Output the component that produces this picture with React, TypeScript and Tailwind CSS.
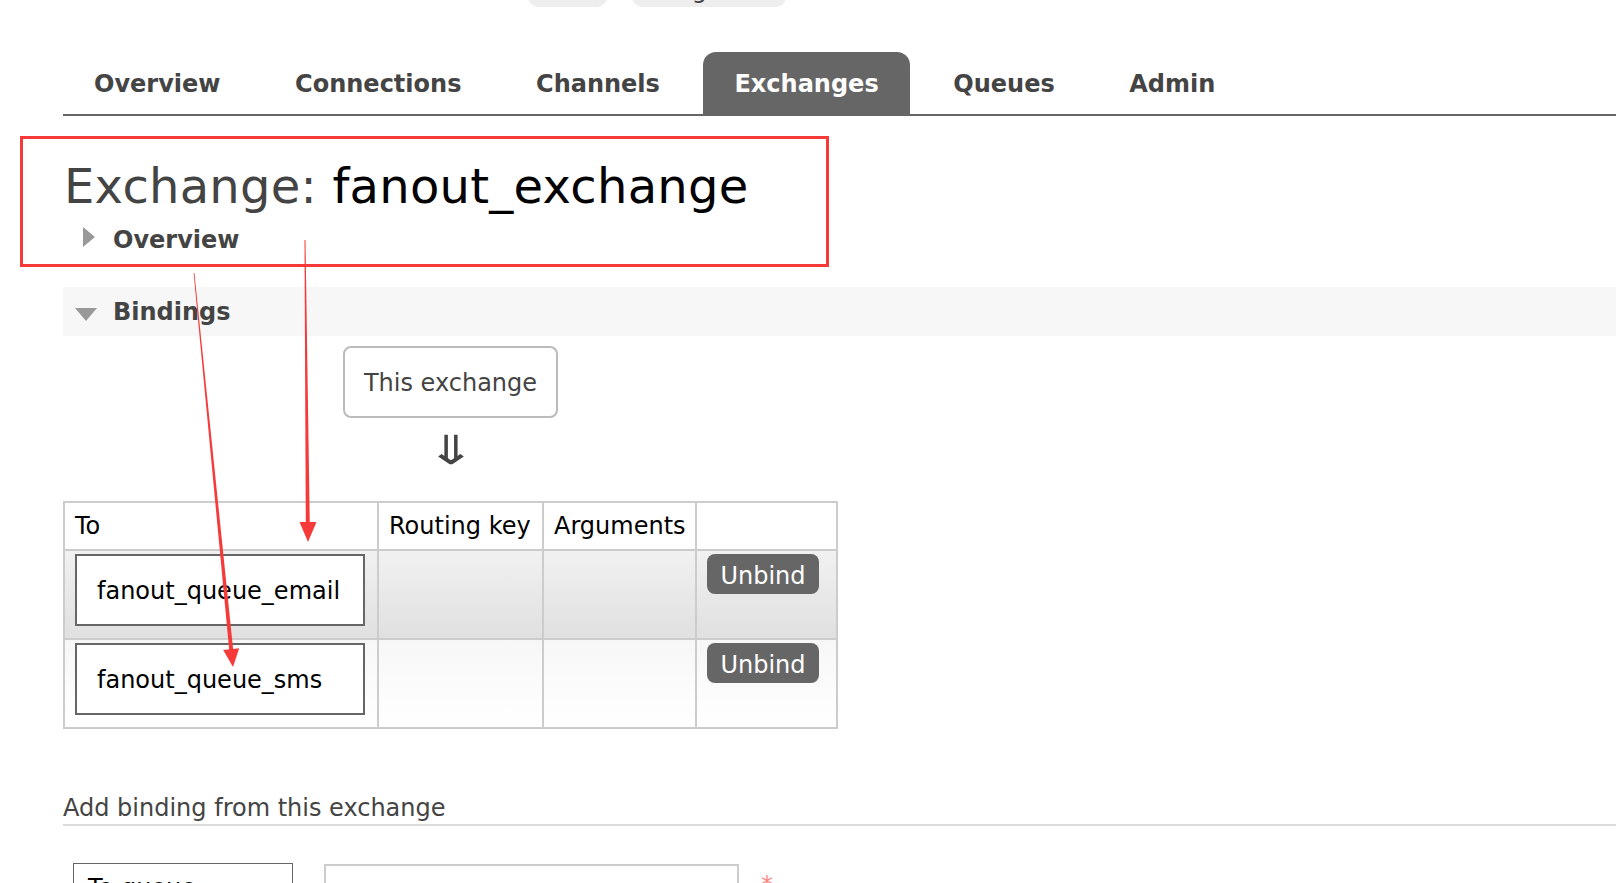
import type { FC } from 'react';

const tabs = ['Overview', 'Connections', 'Channels', 'Exchanges', 'Queues', 'Admin'];
const bindings = ['fanout_queue_email', 'fanout_queue_sms'];

const Annotations: FC = () => (
  <svg className="pointer-events-none absolute left-0 top-0" width={1616} height={883}>
    <rect x={21.5} y={137.5} width={806} height={128} fill="none" stroke="#f63a3a" strokeWidth={3} />
    {/* arrow to the "To" header */}
    <polygon points="304.5,240 305.5,240 309.8,525 305.8,525" fill="#f63a3a" />
    <polygon points="299.5,522 316.5,522 308,542" fill="#f63a3a" />
    {/* arrow to the second queue */}
    <polygon points="193.6,273 194.4,273 233.2,650 229.2,650" fill="#f63a3a" />
    <polygon points="223.2,649.9 239.2,648.3 233,667" fill="#f63a3a" />
  </svg>
);

export default function App() {
  return (
    <div className="relative h-[883px] w-full overflow-hidden bg-white font-['DejaVu_Sans',sans-serif] text-[#444]">
      {/* header controls, cut off by the top edge */}
      <div className="flex h-[7px] items-end overflow-hidden">
        <div className="ml-[528px] h-[44px] w-[79px] shrink-0 rounded-b-[10px] bg-[#eee]" />
        <div className="ml-[25px] flex h-[44px] w-[154px] shrink-0 items-end justify-center rounded-b-[10px] bg-[#eee] pb-[1px] text-[24px] leading-[32px]">
          Log out
        </div>
      </div>

      {/* tabs */}
      <nav className="ml-[63px] mt-[45px] flex border-b-2 border-[#666]">
        {tabs.map((t) => (
          <div
            key={t}
            className={
              t === 'Exchanges'
                ? 'mr-[12.6px] flex h-[62px] items-center rounded-t-[13px] bg-[#666] px-[31px] pt-[2px] text-[24px] font-bold text-white'
                : 'mr-[12.6px] flex h-[62px] items-center px-[31px] pt-[2px] text-[24px] font-bold text-[#444]'
            }
          >
            {t}
          </div>
        ))}
      </nav>

      {/* title */}
      <h1 className="ml-[64px] mt-[42px] h-[56px] text-[48px] font-normal leading-[56px] tracking-[0.25px] text-[#444]">
        Exchange: <span className="text-black">fanout_exchange</span>
      </h1>

      <div className="ml-[83px] mt-[10px] flex h-[32px] items-center gap-[18px]">
        <svg width={12} height={20} className="mt-[-6px]">
          <polygon points="0,0 12,10 0,20" fill="#999" />
        </svg>
        <span className="text-[24px] font-bold leading-[32px] text-[#444]">Overview</span>
      </div>

      {/* bindings section */}
      <div className="ml-[63px] mt-[31px] flex h-[49px] items-center bg-[#f7f7f7] pl-[12px]">
        <svg width={22} height={13} className="mt-[6px]">
          <polygon points="0,0 22,0 11,13" fill="#999" />
        </svg>
        <span className="ml-[16px] text-[24px] font-bold leading-[32px] text-[#444]">Bindings</span>
      </div>

      <div className="ml-[63px] flex w-[775px] flex-col items-center">
        <div className="mt-[10px] flex h-[72px] w-[215px] items-center justify-center rounded-[8px] border-2 border-[#bbb] pt-[2px] text-[24px] leading-[32px] text-[#444]">
          This exchange
        </div>
        <div className="mt-[12px] flex h-[40px] scale-x-[1.5] items-center justify-center text-[40px] leading-none text-[#444]">
          ⇓
        </div>
      </div>

      <div className="ml-[63px] mt-[31px] grid w-[775px] grid-cols-[314px_165px_153px_141px] border-l-2 border-t-2 border-[#ccc] text-[24px] leading-[32px] text-black">
        <div className="flex h-[48px] items-center border-b-2 border-r-2 border-[#ccc] pl-[10px]">To</div>
        <div className="flex h-[48px] items-center border-b-2 border-r-2 border-[#ccc] pl-[10px]">Routing key</div>
        <div className="flex h-[48px] items-center border-b-2 border-r-2 border-[#ccc] pl-[10px]">Arguments</div>
        <div className="h-[48px] border-b-2 border-r-2 border-[#ccc]" />
        {bindings.map((q, i) => {
          const bg =
            i === 0
              ? 'bg-linear-to-b from-[#f1f1f1] to-[#e0e0e0]'
              : 'bg-linear-to-b from-[#f7f7f7] to-[#ffffff]';
          return [
            <div key={q + 'a'} className={`h-[89px] border-b-2 border-r-2 border-[#ccc] pl-[10px] pt-[3px] ${bg}`}>
              <div className="flex h-[72px] w-[290px] items-center border-2 border-[#666] bg-white pl-[20px] pt-[2px]">{q}</div>
            </div>,
            <div key={q + 'b'} className={`h-[89px] border-b-2 border-r-2 border-[#ccc] ${bg}`} />,
            <div key={q + 'c'} className={`h-[89px] border-b-2 border-r-2 border-[#ccc] ${bg}`} />,
            <div key={q + 'd'} className={`h-[89px] border-b-2 border-r-2 border-[#ccc] pl-[10px] pt-[3px] ${bg}`}>
              <button className="flex h-[40px] w-[112px] items-center justify-center rounded-[8px] bg-[#666] pt-[3px] text-[24px] leading-[32px] text-white">
                Unbind
              </button>
            </div>,
          ];
        })}
      </div>

      {/* add binding */}
      <h2 className="ml-[63px] mt-[63px] border-b-2 border-[#ddd] text-[24px] font-normal leading-[32px] text-[#444]">
        Add binding from this exchange
      </h2>

      <div className="ml-[73px] mt-[37px] flex items-start">
        <div className="flex h-[40px] w-[220px] items-start border border-[#666] pl-[14px] pt-[8px] text-[24px] leading-[32px] text-black">
          To queue
        </div>
        <div className="ml-[31px] mt-[1px] h-[40px] w-[415px] border-2 border-[#ccc]" />
        <span className="ml-[22px] mt-[6px] text-[24px] leading-[32px] text-[#f88]">*</span>
      </div>

      <Annotations />
    </div>
  );
}
